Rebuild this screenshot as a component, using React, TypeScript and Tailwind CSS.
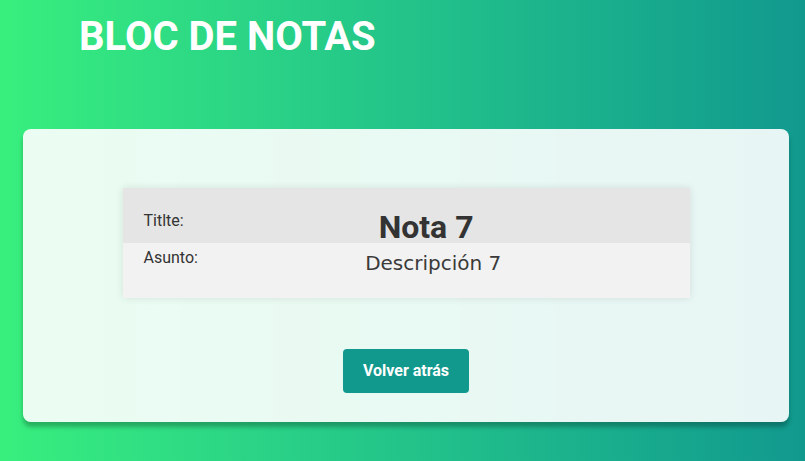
export default function App() {
  return (
    <div className="min-h-screen w-full bg-gradient-to-r from-[#38ef7d] to-[#11998e] font-['Roboto',sans-serif] flex flex-col">
      {/* cabecera */}
      <header className="pl-[79px] pt-[17px]">
        <h1 className="text-[40px] leading-none font-bold text-white">BLOC DE NOTAS</h1>
      </header>

      {/* tarjeta */}
      <main className="ml-[23px] mr-[16px] mt-[72px] h-[293px] rounded-lg bg-white/90 shadow-[0_5px_4px_rgba(0,0,0,0.25)] flex flex-col items-center pt-[59px]">
        <div className="w-[567px] shadow-[0_0_8px_rgba(0,0,0,0.1)] text-[#333]">
          <div className="h-[55px] bg-[#e5e5e5] flex items-start pt-[23px] pl-[21px] pr-[21px]">
            <span className="text-[16px] leading-[19px]">Titlte:</span>
            <h2 className="flex-1 text-center text-[32px] leading-none font-bold">Nota 7</h2>
          </div>
          <div className="h-[55px] bg-[#f2f2f2] flex items-start pl-[21px] pr-[21px]">
            <span className="mt-[5px] text-[16px] leading-[19px]">Asunto:</span>
            <p className="mt-[10px] flex-1 text-center text-[20px] leading-none font-['DejaVu_Sans',sans-serif] text-[#3a3a3a]">
              Descripción 7
            </p>
          </div>
        </div>

        <button className="mt-[51px] w-[126px] h-[44px] rounded bg-[#11998e] text-white text-[16px] font-bold">
          Volver atrás
        </button>
      </main>
    </div>
  );
}
